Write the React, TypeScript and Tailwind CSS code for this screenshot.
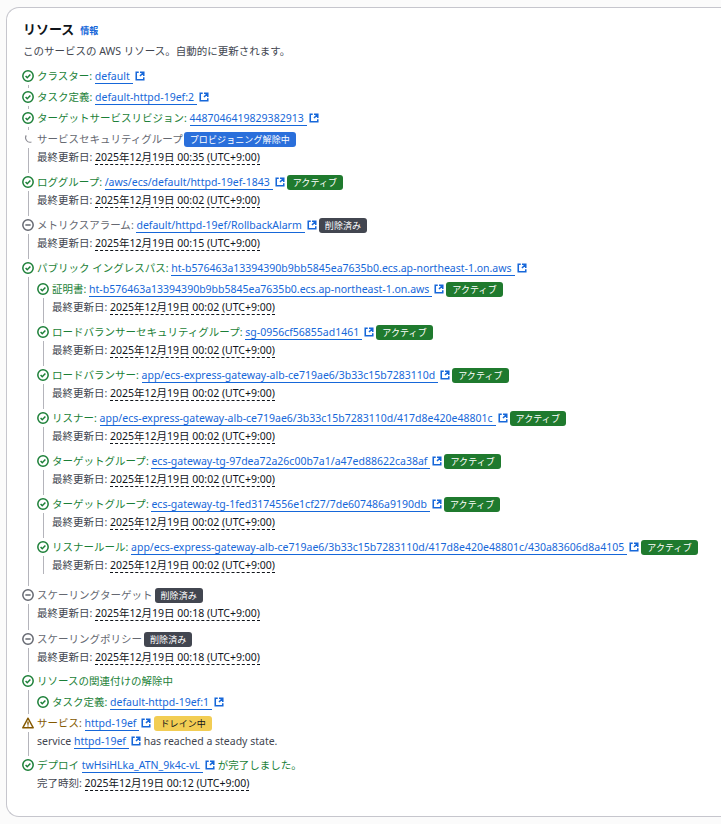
const ff = "font-['Noto_Sans','Noto_Sans_CJK_JP',sans-serif]"

type Status = 'ok' | 'pending' | 'removed' | 'warn'

interface Resource {
  status: Status
  label: string
  link?: string
  badge?: 'active' | 'removed' | 'drain' | 'deprov'
  date?: string
  gap?: string
  children?: Resource[]
}

const StatusIcon = ({ status }: { status: Status }) => {
  if (status === 'ok') {
    return (
      <svg viewBox="0 0 16 16" className="w-3 h-3 shrink-0 text-[#1b7f37]" fill="none" stroke="currentColor" strokeWidth="2">
        <circle cx="8" cy="8" r="6.9" />
        <path d="M4.8 8l2.2 2.3 4.2-4.4" />
      </svg>
    )
  }
  if (status === 'removed') {
    return (
      <svg viewBox="0 0 16 16" className="w-3 h-3 shrink-0 text-[#656871]" fill="none" stroke="currentColor" strokeWidth="2">
        <circle cx="8" cy="8" r="6.9" />
        <path d="M4.5 8h7" />
      </svg>
    )
  }
  if (status === 'warn') {
    return (
      <svg viewBox="0 0 16 16" className="w-3 h-3 shrink-0 text-[#855900]" fill="none" stroke="currentColor" strokeWidth="1.9">
        <path d="M8 1.6L1 14.4h14z" strokeLinejoin="round" />
        <path d="M8 6v4.2M8 11.4v1.3" />
      </svg>
    )
  }
  return (
    <svg viewBox="0 0 16 16" className="w-3 h-3 shrink-0 text-[#8c8c94]" fill="none" stroke="currentColor" strokeWidth="1.5">
      <path d="M5.6 3.2A6 6 0 0 0 12.6 12" />
    </svg>
  )
}

const ExternalIcon = () => (
  <svg viewBox="0 0 16 16" className="inline-block w-[10px] h-[10px] ml-[2px] align-[-1px] text-[#1667d9]" fill="none" stroke="currentColor" strokeWidth="2.5">
    <path d="M14 8.01v-6H8M14.02 2L8 8.01M6 2.01H2v12h12V10" />
  </svg>
)

const Link = ({ text }: { text: string }) => (
  <span className="whitespace-nowrap">
    <span className="text-[#1667d9] border-b border-[#1667d9] pr-[3px]">{text}</span>
    <ExternalIcon />
  </span>
)

const Badge = ({ kind }: { kind: NonNullable<Resource['badge']> }) => {
  if (kind === 'active') {
    return <span className="ml-[2px] inline-block h-[15px] leading-[15px] px-[6px] rounded-[3px] bg-[#1f7a2e] text-white text-[9px] tracking-[0.1px]">アクティブ</span>
  }
  if (kind === 'removed') {
    return <span className="ml-[2px] inline-block h-[15px] leading-[15px] px-[6px] rounded-[3px] bg-[#424650] text-white text-[9px] tracking-[0.1px]">削除済み</span>
  }
  if (kind === 'drain') {
    return <span className="ml-[3px] inline-block h-[15px] leading-[15px] px-[6px] rounded-[3px] bg-[#f2cd54] text-[#0f141a] text-[9px] tracking-[0.1px]">ドレイン中</span>
  }
  return <span className="ml-px inline-block h-[15px] leading-[15px] px-[6px] rounded-[3px] bg-[#2a6fdb] text-white text-[9px] tracking-[0.1px]">プロビジョニング解除中</span>
}

const Detail = ({ label, date }: { label: string; date: string }) => (
  <div className="h-[18px] leading-[18px] text-[#424650] whitespace-nowrap">
    {label}: <span className="text-[#0f141a] border-b border-dashed border-[#0f141a]">{date}</span>
  </div>
)

const labelColor: Record<Status, string> = {
  ok: 'text-[#1b7f37]',
  pending: 'text-[#656871]',
  removed: 'text-[#656871]',
  warn: 'text-[#855900]',
}

const Row = ({ item, last }: { item: Resource; last?: boolean }) => (
  <div className="flex">
    <div className="flex flex-col items-center w-3 mr-[3px] shrink-0">
      <div className="h-[18px] flex items-center"><StatusIcon status={item.status} /></div>
      {!last && <div className="w-px grow bg-[#b4b4bb]" />}
    </div>
    <div className={`min-w-0 grow ${item.gap ?? 'pb-[3px]'}`}>
      <div className={`h-[18px] leading-[18px] whitespace-nowrap ${labelColor[item.status]}`}>
        {item.label}
        {item.link && <>{item.link.startsWith('!') ? ' ' : ': '}<Link text={item.link.replace('!', '')} /></>}
        {item.label === 'デプロイ' && <span> が完了しました。</span>}
        {item.badge && <Badge kind={item.badge} />}
      </div>
      {item.label === 'サービス' && (
        <div className="h-[18px] leading-[18px] text-[#424650] whitespace-nowrap">
          service <Link text="httpd-19ef" /> has reached a steady state.
        </div>
      )}
      {item.date && <Detail label={item.label === 'デプロイ' ? '完了時刻' : '最終更新日'} date={item.date} />}
      {item.children && (
        <div className="pt-[3px]">
          {item.children.map((c, i) => <Row key={i} item={c} />)}
        </div>
      )}
    </div>
  </div>
)

const D2 = '2025年12月19日 00:02 (UTC+9:00)'

const resources: Resource[] = [
  { status: 'ok', label: 'クラスター', link: 'default' },
  { status: 'ok', label: 'タスク定義', link: 'default-httpd-19ef:2' },
  { status: 'ok', label: 'ターゲットサービスリビジョン', link: '4487046419829382913' },
  { status: 'pending', label: 'サービスセキュリティグループ', badge: 'deprov', date: '2025年12月19日 00:35 (UTC+9:00)', gap: 'pb-[7px]' },
  { status: 'ok', label: 'ロググループ', link: '/aws/ecs/default/httpd-19ef-1843', badge: 'active', date: D2, gap: 'pb-[7px]' },
  { status: 'removed', label: 'メトリクスアラーム', link: 'default/httpd-19ef/RollbackAlarm', badge: 'removed', date: '2025年12月19日 00:15 (UTC+9:00)', gap: 'pb-[7px]' },
  {
    status: 'ok',
    label: 'パブリック イングレスパス',
    link: 'ht-b576463a13394390b9bb5845ea7635b0.ecs.ap-northeast-1.on.aws',
    gap: 'pb-[12px]',
    children: [
      { status: 'ok', label: '証明書', link: 'ht-b576463a13394390b9bb5845ea7635b0.ecs.ap-northeast-1.on.aws', badge: 'active', date: D2, gap: 'pb-[7px]' },
      { status: 'ok', label: 'ロードバランサーセキュリティグループ', link: 'sg-0956cf56855ad1461', badge: 'active', date: D2, gap: 'pb-[7px]' },
      { status: 'ok', label: 'ロードバランサー', link: 'app/ecs-express-gateway-alb-ce719ae6/3b33c15b7283110d', badge: 'active', date: D2, gap: 'pb-[7px]' },
      { status: 'ok', label: 'リスナー', link: 'app/ecs-express-gateway-alb-ce719ae6/3b33c15b7283110d/417d8e420e48801c', badge: 'active', date: D2, gap: 'pb-[7px]' },
      { status: 'ok', label: 'ターゲットグループ', link: 'ecs-gateway-tg-97dea72a26c00b7a1/a47ed88622ca38af', badge: 'active', date: D2, gap: 'pb-[7px]' },
      { status: 'ok', label: 'ターゲットグループ', link: 'ecs-gateway-tg-1fed3174556e1cf27/7de607486a9190db', badge: 'active', date: D2, gap: 'pb-[7px]' },
      { status: 'ok', label: 'リスナールール', link: 'app/ecs-express-gateway-alb-ce719ae6/3b33c15b7283110d/417d8e420e48801c/430a83606d8a4105', badge: 'active', date: D2, gap: 'pb-0' },
    ],
  },
  { status: 'removed', label: 'スケーリングターゲット', badge: 'removed', date: '2025年12月19日 00:18 (UTC+9:00)', gap: 'pb-[8px]' },
  { status: 'removed', label: 'スケーリングポリシー', badge: 'removed', date: '2025年12月19日 00:18 (UTC+9:00)', gap: 'pb-[6px]' },
  {
    status: 'ok',
    label: 'リソースの関連付けの解除中',
    gap: 'pb-[3px]',
    children: [{ status: 'ok', label: 'タスク定義', link: 'default-httpd-19ef:1', gap: 'pb-0' }],
  },
  { status: 'warn', label: 'サービス', link: 'httpd-19ef', badge: 'drain', gap: 'pb-[6px]' },
  { status: 'ok', label: 'デプロイ', link: '!twHsiHLka_ATN_9k4c-vL', date: '2025年12月19日 00:12 (UTC+9:00)', gap: 'pb-0' },
]

export default function App() {
  return (
    <div className={`min-h-screen bg-[#fbfbfb] pt-[7px] pl-[6px] text-[10.5px] ${ff}`}>
      <div className="h-[810px] w-[715px] bg-white border border-r-0 border-[#c6c6cd] rounded-l-[13px] overflow-hidden pl-[16px] pt-[11px]">
        <div className="flex items-baseline gap-[6px] h-[20px]">
          <h2 className="text-[13px] font-bold text-[#0f141a] leading-[20px]">リソース</h2>
          <span className="text-[9px] font-semibold text-[#1667d9]">情報</span>
        </div>
        <p className="mt-[3px] h-[18px] leading-[18px] text-[#424650]">このサービスの AWS リソース。自動的に更新されます。</p>
        <div className="mt-[7px] -ml-px">
          {resources.map((r, i) => <Row key={i} item={r} last={i === resources.length - 1} />)}
        </div>
      </div>
    </div>
  )
}
